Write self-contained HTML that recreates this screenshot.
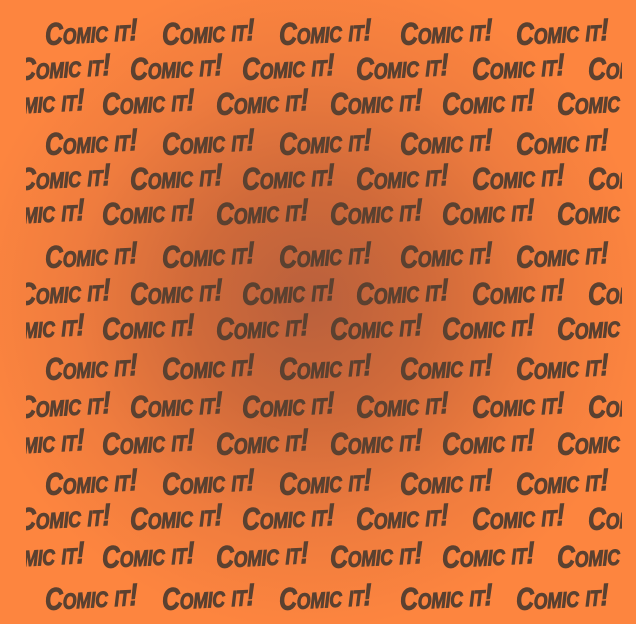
<!DOCTYPE html>
<html><head><meta charset="utf-8">
<style>
html,body{margin:0;padding:0}
body{width:636px;height:624px;overflow:hidden;position:relative;
background:radial-gradient(ellipse 340px 330px at 310px 300px,#b9603c 0%,#d06a3a 35%,#ef7c3e 70%,#fd853f 100%);}
#clip{position:absolute;left:26px;top:0;width:596px;height:624px;overflow:hidden}
.w{position:absolute;white-space:nowrap;font-family:"Liberation Sans Narrow","Liberation Sans",sans-serif;
font-weight:bold;font-style:italic;font-variant:small-caps;font-size:31px;line-height:31px;color:#5b4130;
-webkit-text-stroke:1px #5b4130;
transform-origin:0 50%;transform:scaleX(0.8) rotate(-2.5deg);letter-spacing:-0.3px}
</style></head><body>
<div id="clip"></div>
<script>
var c=document.getElementById('clip');
var types=[[45,162,279,400,516],[18,130,242,356,472,588],[-8,102,216,330,442,557]];
var ys=[35,70,105,145,180,215,258,295,330,370,408,445,485,520,558,600];
for(var i=0;i<ys.length;i++){
 var t=types[i%3];
 for(var j=0;j<t.length;j++){
  var s=document.createElement('span');s.className='w';s.textContent='Comic it!';
  s.style.left=(t[j]-26)+'px';s.style.top=(ys[i]-16)+'px';c.appendChild(s);
 }
}
</script>
</body></html>
